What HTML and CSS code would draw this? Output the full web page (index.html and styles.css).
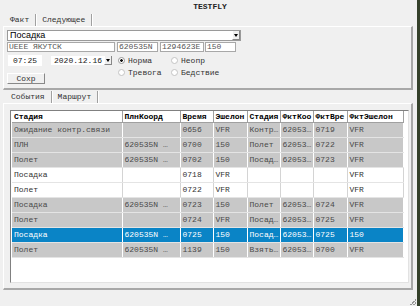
FILE: index.html
```html
<!DOCTYPE html>
<html lang="ru">
<head>
  <meta charset="UTF-8">
  <title>TESTFLY</title>
  <link rel="stylesheet" href="styles.css">
</head>
<body>
  <div class="screen">
    <div class="window">
      <div class="caption">TESTFLY</div>

      <div class="tabs">
        <span class="tab">Факт</span>
        <span class="tab">Следующее</span>
      </div>

      <div class="panel fact">
        <div class="combo wide">
          <span class="combo-text">Посадка</span>
          <span class="drop"></span>
        </div>

        <div class="fields">
          <span class="field f-airport">UEEE ЯКУТСК</span>
          <span class="field f-lat">620535N</span>
          <span class="field f-lon">1294623E</span>
          <span class="field f-level">150</span>
        </div>

        <div class="controls">
          <div class="left-col">
            <span class="time">07:25</span>
            <button class="btn">Сохр</button>
          </div>
          <div class="combo date">
            <span class="combo-text mono">2020.12.16</span>
            <span class="drop"></span>
          </div>
          <div class="radios">
            <span class="radio checked">Норма</span>
            <span class="radio">Неопр</span>
            <span class="radio">Тревога</span>
            <span class="radio">Бедствие</span>
          </div>
        </div>
      </div>

      <div class="tabs second">
        <span class="tab">События</span>
        <span class="tab">Маршрут</span>
      </div>

      <div class="panel events">
        <div class="grid">
          <table>
            <colgroup>
              <col class="c-stage">
              <col class="c-coord">
              <col class="c-time">
              <col class="c-level">
              <col class="c-stage2">
              <col class="c-fcoord">
              <col class="c-ftime">
              <col class="c-flevel">
            </colgroup>
            <thead>
              <tr>
                <th>Стадия</th>
                <th>ПлнКоорд</th>
                <th>Время</th>
                <th>Эшелон</th>
                <th>Стадия</th>
                <th>ФктКоо</th>
                <th>ФктВре</th>
                <th>ФктЭшелон</th>
              </tr>
            </thead>
            <tbody>
              <tr class="grey">
                <td>Ожидание контр.связи</td><td></td><td>0656</td><td>VFR</td><td>Контр…</td><td>62053…</td><td>0719</td><td>VFR</td>
              </tr>
              <tr class="grey">
                <td>ПЛН</td><td>620535N …</td><td>0700</td><td>150</td><td>Полет</td><td>62053…</td><td>0722</td><td>VFR</td>
              </tr>
              <tr class="grey">
                <td>Полет</td><td>620535N …</td><td>0702</td><td>150</td><td>Посад…</td><td>62053…</td><td>0723</td><td>VFR</td>
              </tr>
              <tr class="white">
                <td>Посадка</td><td></td><td>0718</td><td>VFR</td><td></td><td></td><td></td><td>VFR</td>
              </tr>
              <tr class="white">
                <td>Полет</td><td></td><td>0722</td><td>VFR</td><td></td><td></td><td></td><td>VFR</td>
              </tr>
              <tr class="grey">
                <td>Посадка</td><td>620535N …</td><td>0723</td><td>150</td><td>Полет</td><td>62053…</td><td>0724</td><td>VFR</td>
              </tr>
              <tr class="grey">
                <td>Полет</td><td></td><td>0724</td><td>VFR</td><td>Посад…</td><td>62053…</td><td>0725</td><td>VFR</td>
              </tr>
              <tr class="sel">
                <td>Посадка</td><td>620535N …</td><td>0725</td><td>150</td><td>Посад…</td><td>62053…</td><td>0725</td><td>150</td>
              </tr>
              <tr class="grey">
                <td>Полет</td><td>620535N …</td><td>1139</td><td>150</td><td>Взять…</td><td>62053…</td><td>0700</td><td>VFR</td>
              </tr>
            </tbody>
          </table>
        </div>
      </div>
      <span class="grip"></span>
    </div>
    <div class="edge"></div>
  </div>
</body>
</html>
```

FILE: styles.css
```css
* {
  margin: 0;
  padding: 0;
  box-sizing: border-box;
}

body {
  width: 420px;
  height: 306px;
  overflow: hidden;
  background: #3b4630;
  font-family: 'Liberation Mono', monospace;
  font-size: 8px;
  color: #333;
}

.screen {
  display: flex;
  height: 306px;
}

.window {
  position: relative;
  width: 417px;
  height: 306px;
  background: #f0f0f0;
  padding-left: 3px;
  display: flex;
  flex-direction: column;
}

.edge {
  flex: 1;
  background: #34402a;
}

.caption {
  height: 14px;
  line-height: 14px;
  text-align: center;
  font-weight: bold;
  color: #222;
}

/* tabs */
.tabs {
  display: flex;
  height: 12px;
}

.tab {
  padding: 0 6px;
  line-height: 12px;
  border-right: 1px solid #a0a0a0;
  box-shadow: 1px 0 0 #fff;
  color: #333;
}

.tabs .tab:first-child {
  margin-left: 1px;
}

.tabs.second {
  margin-top: 1px;
}

.tabs.second .tab:first-child {
  margin-left: 2px;
}

/* panels */
.panel {
  width: 410px;
  border-top: 1px solid #fff;
  border-left: 1px solid #fff;
  border-right: 2px solid #a8a8a8;
  border-bottom: 2px solid #a8a8a8;
}

.fact {
  height: 64px;
  padding: 3px;
}

.combo {
  display: flex;
  height: 11px;
  background: #fff;
  border: 1px solid #9a9a9a;
}

.combo.wide {
  width: 234px;
}

.combo-text {
  flex: 1;
  padding-left: 2px;
  font-family: 'Liberation Sans', Arial, sans-serif;
  font-size: 9px;
  line-height: 9px;
  color: #000;
  white-space: nowrap;
}

.combo-text.mono {
  font-family: 'Liberation Mono', monospace;
  font-size: 8px;
  padding-left: 3px;
  color: #222;
}

.drop {
  width: 8px;
  display: flex;
  align-items: center;
  justify-content: center;
  background: #f0f0f0;
  border-left: 1px solid #fff;
  border-right: 1px solid #888;
  border-bottom: 1px solid #888;
}

.drop::after {
  content: '';
  border-left: 2px solid transparent;
  border-right: 2px solid transparent;
  border-top: 3px solid #000;
}

.fields {
  display: flex;
  height: 10px;
  margin-top: 1px;
}

.field {
  background: #fff;
  border: 1px solid #a8a8a8;
  padding-left: 1px;
  line-height: 8px;
  color: #555;
  white-space: nowrap;
  overflow: hidden;
}

.f-airport { width: 108px; }
.f-lat { width: 41px; margin-left: 2px; }
.f-lon { width: 44px; margin-left: 2px; }
.f-level { width: 31px; margin-left: 1px; }

.controls {
  display: flex;
  align-items: flex-start;
  margin-top: 3px;
}

.left-col {
  width: 38px;
  display: flex;
  flex-direction: column;
}

.time {
  width: 34px;
  height: 11px;
  margin-left: 1px;
  background: #fff;
  line-height: 11px;
  text-align: center;
  color: #222;
}

.btn {
  width: 38px;
  height: 11px;
  margin-top: 7px;
  background: #f0f0f0;
  border: none;
  border-top: 1px solid #fff;
  border-left: 1px solid #fff;
  border-right: 1px solid #888;
  border-bottom: 1px solid #888;
  font-family: 'Liberation Mono', monospace;
  font-size: 8px;
  color: #333;
}

.combo.date {
  width: 63px;
  margin-left: 5px;
  border-color: #f0f0f0;
}

.radios {
  display: grid;
  grid-template-columns: 53px auto;
  grid-auto-rows: 12px;
  margin-left: 4px;
  margin-top: -1px;
}

.radio {
  display: flex;
  align-items: center;
  gap: 3px;
  padding-left: 1px;
  color: #333;
}

.radio::before {
  content: '';
  width: 5px;
  height: 5px;
  border-radius: 50%;
  border: 1px solid #c4c4c4;
  background: #fff;
}

.radio.checked::before {
  border-color: #999;
  background: radial-gradient(circle, #111 0 1px, #fff 1.6px);
}

/* events grid */
.events {
  height: 187px;
  padding: 6px 2px 5px 6px;
}

.grid {
  height: 100%;
  background: #fff;
  border-top: 1px solid #808080;
  border-left: 1px solid #808080;
  border-right: 1px solid #e2e2e2;
  border-bottom: 1px solid #e2e2e2;
  padding-left: 1px;
  overflow: hidden;
}

table {
  width: 391px;
  table-layout: fixed;
  border-collapse: collapse;
}

.c-stage { width: 110px; }
.c-coord { width: 58px; }
.c-time { width: 33px; }
.c-level { width: 34px; }
.c-stage2 { width: 33px; }
.c-fcoord { width: 33px; }
.c-ftime { width: 34px; }
.c-flevel { width: 56px; }

th {
  height: 11px;
  padding: 0 2px;
  text-align: left;
  font-weight: bold;
  color: #000;
  background: #fff;
  border-right: 1px solid #a0a0a0;
  border-bottom: 1px solid #a0a0a0;
  white-space: nowrap;
  overflow: hidden;
}

td {
  height: 15px;
  padding: 0 2px;
  border-right: 1px solid #fff;
  border-bottom: 1px solid #e4e4e4;
  white-space: nowrap;
  overflow: hidden;
}

tr.grey td {
  background: #c8c8c8;
  color: #4a4a4a;
}

tr.white td {
  background: #fff;
  color: #333;
  border-right-color: #d4d4d4;
}

tr.sel td {
  background: #0a84c6;
  color: #fff;
}

.grip {
  position: absolute;
  right: 1px;
  bottom: 1px;
  width: 6px;
  height: 6px;
  background: linear-gradient(135deg, transparent 50%, #999 50%, #999 60%, transparent 60%, transparent 75%, #999 75%, #999 85%, transparent 85%);
}
```
